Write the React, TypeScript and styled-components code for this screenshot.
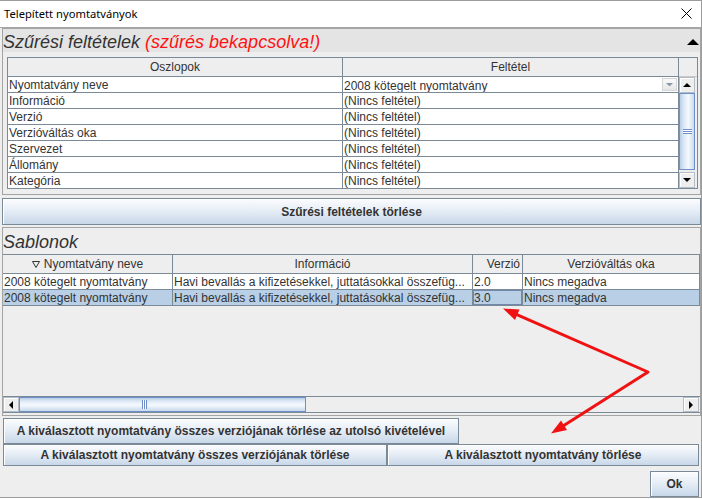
import React from "react";
import styled, { createGlobalStyle } from "styled-components";

const GRID = "#7a8a99";
const SEL = "#b8cfe5";

const GlobalStyle = createGlobalStyle`
  html, body { margin: 0; padding: 0; background: #ffffff; }
  * { box-sizing: border-box; }
`;

const Window = styled.div`
  position: relative;
  width: 702px;
  height: 498px;
  display: flex;
  flex-direction: column;
  background: #eeeeee;
  border-top: 1px solid #9c9c9c;
  border-right: 1px solid #9c9c9c;
  border-bottom: 1px solid #9c9c9c;
  font-family: "Liberation Sans", Arial, sans-serif;
  font-size: 12px;
  color: #333333;
  overflow: hidden;
`;

const TitleBar = styled.div`
  flex: none;
  height: 27px;
  display: flex;
  align-items: center;
  justify-content: space-between;
  background: #ffffff;
  border-bottom: 1px solid #a6a6a6;
  padding: 0 9px 1px 4px;
  font-family: "Noto Sans", "Open Sans", sans-serif;
  font-size: 11.2px;
  color: #000000;
`;

const Content = styled.div`
  flex: 1;
  display: flex;
  flex-direction: column;
  padding-left: 2px;
`;

const Section = styled.section<{ $h: number; $mt?: number }>`
  flex: none;
  height: ${(p) => p.$h}px;
  margin-top: ${(p) => p.$mt ?? 0}px;
  display: flex;
  flex-direction: column;
  border: 1px solid #a4a4a4;
  background: #eeeeee;
`;

const SectionHeader = styled.div<{ $h: number; $shade?: boolean; $pt: number }>`
  flex: none;
  height: ${(p) => p.$h}px;
  display: flex;
  align-items: center;
  justify-content: space-between;
  padding: ${(p) => p.$pt}px 1px 0 0;
  background: ${(p) => (p.$shade ? "#e4e4e4" : "transparent")};
  font-style: italic;
  font-size: 18px;
  color: #333333;
  white-space: nowrap;
`;

const Alert = styled.span`
  color: #ff1111;
`;

const FilterPane = styled.div`
  flex: none;
  height: 132px;
  margin: 5px 2px 0 4px;
  display: flex;
  flex-direction: column;
  border: 1px solid ${GRID};
  background: #eeeeee;
  overflow: hidden;
`;

const TemplatePane = styled.div`
  flex: none;
  height: 159px;
  display: flex;
  flex-direction: column;
  border-top: 1px solid ${GRID};
  border-bottom: 1px solid ${GRID};
  background: #eeeeee;
  overflow: hidden;
`;

const HeaderRow = styled.div`
  flex: none;
  height: 19px;
  display: flex;
`;

const HeaderCell = styled.div<{ $w?: number; $align?: string }>`
  flex: ${(p) => (p.$w ? "none" : "1")};
  width: ${(p) => (p.$w ? `${p.$w}px` : "auto")};
  display: flex;
  align-items: center;
  justify-content: ${(p) => p.$align ?? "center"};
  gap: 4px;
  padding: 0 2px;
  border-right: 1px solid ${GRID};
  border-bottom: 1px solid ${GRID};
  background: #eeeeee;
  white-space: nowrap;
  overflow: hidden;
`;

const Corner = styled.div`
  flex: 1;
  border-bottom: 1px solid #c8c8c8;
  background: #eeeeee;
`;

const BodyArea = styled.div`
  flex: 1;
  display: flex;
  min-height: 0;
`;

const Rows = styled.div<{ $w?: number }>`
  flex: ${(p) => (p.$w ? "none" : "1")};
  width: ${(p) => (p.$w ? `${p.$w}px` : "auto")};
  display: flex;
  flex-direction: column;
  overflow: hidden;
`;

const Row = styled.div`
  flex: none;
  height: 16px;
  display: flex;
`;

const Cell = styled.div<{ $w?: number; $sel?: boolean; $focus?: boolean }>`
  flex: ${(p) => (p.$w ? "none" : "1")};
  width: ${(p) => (p.$w ? `${p.$w}px` : "auto")};
  padding: 0 1px;
  line-height: 16px;
  border-right: 1px solid ${GRID};
  border-bottom: 1px solid ${GRID};
  background: ${(p) => (p.$sel ? SEL : "#ffffff")};
  box-shadow: ${(p) => (p.$focus ? "inset 0 0 0 1px #7088aa" : "none")};
  white-space: nowrap;
  overflow: hidden;
`;

const Combo = styled.div<{ $w: number }>`
  flex: none;
  width: ${(p) => p.$w}px;
  display: flex;
  border: 1px solid ${GRID};
  border-left: none;
  margin-top: -1px;
  height: 17px;
  background: #ffffff;
`;

const ComboText = styled.div`
  flex: 1;
  padding: 2px 1px 0 1px;
  line-height: 15px;
  white-space: nowrap;
  overflow: hidden;
`;

const ComboButton = styled.div`
  flex: none;
  width: 15px;
  margin: 1px 1px 1px 0;
  display: flex;
  align-items: center;
  justify-content: center;
  background: linear-gradient(#fafafa, #e6e6e6);
  border: 1px solid #d6d6d6;
`;

const VScroll = styled.div`
  flex: 1;
  display: flex;
  flex-direction: column;
  padding-right: 2px;
  background: #eeeeee;
`;

const ArrowBtn = styled.div<{ $w?: number; $h?: number }>`
  flex: none;
  width: ${(p) => p.$w ?? 16}px;
  height: ${(p) => p.$h ?? 16}px;
  display: flex;
  align-items: center;
  justify-content: center;
  background: #eeeeee;
  border: 1px solid #b4bcc6;
  box-shadow: inset 1px 1px 0 #ffffff;
`;

const VThumb = styled.div`
  flex: 1;
  margin: 0 0 2px 0;
  display: flex;
  align-items: center;
  justify-content: center;
  border: 1px solid #6f8fc8;
  background: linear-gradient(to right, #b9cfe8 0%, #dfe9f6 30%, #f6f9fd 60%, #c8d9ec 100%);
`;

const VGrip = styled.div`
  width: 9px;
  height: 5px;
  background: repeating-linear-gradient(to bottom, #6f8fc8 0 1px, #ffffff 1px 2px);
`;

const HScroll = styled.div`
  flex: none;
  height: 16px;
  display: flex;
  border-top: 1px solid ${GRID};
  padding-right: 1px;
  background: #eeeeee;
`;

const HThumb = styled.div<{ $w: number }>`
  flex: none;
  width: ${(p) => p.$w}px;
  display: flex;
  align-items: center;
  justify-content: center;
  border: 1px solid #6f8fc8;
  background: linear-gradient(to bottom, #b9cfe8 0%, #e4edf8 30%, #f6f9fd 55%, #c8d9ec 100%);
`;

const HGrip = styled.div`
  width: 5px;
  height: 9px;
  margin-left: -36px;
  background: repeating-linear-gradient(to right, #6f8fc8 0 1px, #ffffff 1px 2px);
`;

const Track = styled.div`
  flex: 1;
  background: #eeeeee;
`;

const Button = styled.button<{ $w?: number; $h: number }>`
  flex: ${(p) => (p.$w ? "none" : "1")};
  width: ${(p) => (p.$w ? `${p.$w}px` : "auto")};
  height: ${(p) => p.$h}px;
  margin: 0;
  padding: 0;
  font-family: "Liberation Sans", Arial, sans-serif;
  font-weight: bold;
  font-size: 12px;
  color: #333333;
  border: 1px solid ${GRID};
  background: linear-gradient(#fbfcfe 0%, #eef3f9 30%, #dce6f1 65%, #c7d7e9 100%);
  box-shadow: inset 1px 1px 0 #ffffff;
  white-space: nowrap;
`;

const ButtonRow = styled.div<{ $mt?: number; $mr?: number; $ml?: number }>`
  flex: none;
  display: flex;
  margin: ${(p) => p.$mt ?? 0}px ${(p) => p.$mr ?? 0}px 0 ${(p) => p.$ml ?? 0}px;
`;

const WideFilterButton = styled(Button)`
  margin-top: 3px;
`;

const OkRow = styled.div`
  flex: none;
  display: flex;
  justify-content: flex-end;
  margin: 5px 2px 0 0;
`;

const Overlay = styled.svg`
  position: absolute;
  left: 0;
  top: 0;
  pointer-events: none;
`;

const filterRows: [string, string][] = [
  ["Nyomtatvány neve", "2008 kötegelt nyomtatvány"],
  ["Információ", "(Nincs feltétel)"],
  ["Verzió", "(Nincs feltétel)"],
  ["Verzióváltás oka", "(Nincs feltétel)"],
  ["Szervezet", "(Nincs feltétel)"],
  ["Állomány", "(Nincs feltétel)"],
  ["Kategória", "(Nincs feltétel)"],
];

const templates = [
  {
    name: "2008 kötegelt nyomtatvány",
    info: "Havi bevallás a kifizetésekkel, juttatásokkal összefüg...",
    ver: "2.0",
    reason: "Nincs megadva",
    sel: false,
  },
  {
    name: "2008 kötegelt nyomtatvány",
    info: "Havi bevallás a kifizetésekkel, juttatásokkal összefüg...",
    ver: "3.0",
    reason: "Nincs megadva",
    sel: true,
  },
];

const Tri = ({ dir, size = 8, color = "#000" }: { dir: "up" | "down" | "left" | "right"; size?: number; color?: string }) => {
  const h = size / 2;
  const pts: Record<string, string> = {
    up: `0,${h} ${size / 2},0 ${size},${h}`,
    down: `0,0 ${size},0 ${size / 2},${h}`,
    left: `${h},0 0,${size / 2} ${h},${size}`,
    right: `0,0 ${h},${size / 2} 0,${size}`,
  };
  const vertical = dir === "up" || dir === "down";
  return (
    <svg width={vertical ? size : h} height={vertical ? h : size} viewBox={`0 0 ${vertical ? size : h} ${vertical ? h : size}`}>
      <polygon points={pts[dir]} fill={color} />
    </svg>
  );
};

const SortIcon = () => (
  <svg width="8" height="7" viewBox="0 0 8 7">
    <polygon points="0.5,0.5 7.5,0.5 4,6.5" fill="none" stroke="#333" strokeWidth="1" />
  </svg>
);

export default function App() {
  return (
    <>
      <GlobalStyle />
      <Window>
        <TitleBar>
          <span>Telepített nyomtatványok</span>
          <svg width="11" height="11" viewBox="0 0 11 11">
            <path d="M0.5 0.5 L10.5 10.5 M10.5 0.5 L0.5 10.5" stroke="#000" strokeWidth="1" />
          </svg>
        </TitleBar>
        <Content>
          <Section $h={167}>
            <SectionHeader $h={23} $shade $pt={3}>
              <span>
                Szűrési feltételek <Alert>(szűrés bekapcsolva!)</Alert>
              </span>
              <Tri dir="up" size={12} />
            </SectionHeader>
            <FilterPane>
              <HeaderRow>
                <HeaderCell $w={335}>Oszlopok</HeaderCell>
                <HeaderCell $w={336}>Feltétel</HeaderCell>
                <Corner />
              </HeaderRow>
              <BodyArea>
                <Rows $w={671}>
                  {filterRows.map(([col, cond], i) => (
                    <Row key={col}>
                      <Cell $w={335}>{col}</Cell>
                      {i === 0 ? (
                        <Combo $w={336}>
                          <ComboText>{cond}</ComboText>
                          <ComboButton>
                            <Tri dir="down" size={7} color="#8a97a5" />
                          </ComboButton>
                        </Combo>
                      ) : (
                        <Cell $w={336}>{cond}</Cell>
                      )}
                    </Row>
                  ))}
                </Rows>
                <VScroll>
                  <ArrowBtn>
                    <Tri dir="up" size={8} />
                  </ArrowBtn>
                  <VThumb>
                    <VGrip />
                  </VThumb>
                  <ArrowBtn>
                    <Tri dir="down" size={8} />
                  </ArrowBtn>
                </VScroll>
              </BodyArea>
            </FilterPane>
          </Section>

          <WideFilterButton $h={25}>Szűrési feltételek törlése</WideFilterButton>

          <Section $h={189} $mt={2}>
            <SectionHeader $h={26} $pt={3}>
              <span>Sablonok</span>
            </SectionHeader>
            <TemplatePane>
              <HeaderRow>
                <HeaderCell $w={170}>
                  <SortIcon />
                  Nyomtatvány neve
                </HeaderCell>
                <HeaderCell $w={300}>Információ</HeaderCell>
                <HeaderCell $w={50} $align="flex-end">
                  Verzió
                </HeaderCell>
                <HeaderCell>Verzióváltás oka</HeaderCell>
              </HeaderRow>
              <BodyArea>
                <Rows>
                  {templates.map((t) => (
                    <Row key={t.ver}>
                      <Cell $w={170} $sel={t.sel}>
                        {t.name}
                      </Cell>
                      <Cell $w={300} $sel={t.sel}>
                        {t.info}
                      </Cell>
                      <Cell $w={50} $sel={t.sel} $focus={t.sel}>
                        {t.ver}
                      </Cell>
                      <Cell $sel={t.sel}>{t.reason}</Cell>
                    </Row>
                  ))}
                </Rows>
              </BodyArea>
              <HScroll>
                <ArrowBtn $h={15}>
                  <Tri dir="left" size={8} />
                </ArrowBtn>
                <HThumb $w={287}>
                  <HGrip />
                </HThumb>
                <Track />
                <ArrowBtn $h={15}>
                  <Tri dir="right" size={8} />
                </ArrowBtn>
              </HScroll>
            </TemplatePane>
          </Section>

          <ButtonRow $mt={2} $ml={1}>
            <Button $w={456} $h={26}>
              A kiválasztott nyomtatvány összes verziójának törlése az utolsó kivételével
            </Button>
          </ButtonRow>
          <ButtonRow $ml={1} $mr={2}>
            <Button $w={384} $h={22}>
              A kiválasztott nyomtatvány összes verziójának törlése
            </Button>
            <Button $h={22}>A kiválasztott nyomtatvány törlése</Button>
          </ButtonRow>
          <OkRow>
            <Button $w={49} $h={26}>
              Ok
            </Button>
          </OkRow>
        </Content>

        <Overlay width="702" height="499" viewBox="0 0 702 499">
          <g stroke="#f01212" strokeWidth="3" strokeLinecap="round" strokeLinejoin="round" fill="none">
            <polyline points="516.8,313.6 648,371 563.8,424.5" />
          </g>
          <g fill="#f01212">
            <polygon points="503,307.5 519.5,308.5 515,319" />
            <polygon points="551,432.5 567,429 561,419.5" />
          </g>
        </Overlay>
      </Window>
    </>
  );
}
